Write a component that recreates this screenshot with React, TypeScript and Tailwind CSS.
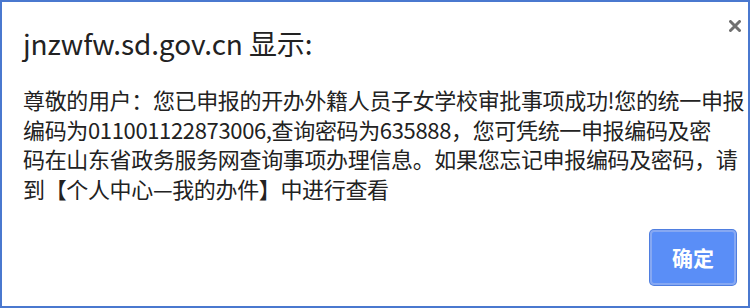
import React from "react";

export default function App() {
  return (
    <div
      className="w-[750px] h-[308px] bg-white border-2 border-[#4a78cf] flex flex-col overflow-hidden"
      style={{ fontFamily: '"Noto Sans CJK SC", "Noto Sans", sans-serif' }}
    >
      <div className="flex justify-between items-start pl-[21px] pr-[7px] pt-[25px]">
        <div className="text-[28px] leading-[32px] text-[#222] tracking-[-0.1px]">
          jnzwfw.sd.gov.cn 显示:
        </div>
        <svg
          width="12"
          height="12"
          viewBox="0 0 12 12"
          className="-mt-[7px]"
          aria-label="close"
        >
          <path d="M1.5 1.5 L10.5 10.5 M10.5 1.5 L1.5 10.5" stroke="#707070" strokeWidth="3" strokeLinecap="round" />
        </svg>
      </div>
      <div className="pl-[21px] pr-[4px] mt-[26px] text-[22px] leading-[29.6px] text-[#222] whitespace-nowrap tracking-[-0.35px]">
        <div>尊敬的用户：您已申报的开办外籍人员子女学校审批事项成功!您的统一申报</div>
        <div>编码为011001122873006,查询密码为635888，您可凭统一申报编码及密</div>
        <div>码在山东省政务服务网查询事项办理信息。如果您忘记申报编码及密码，请</div>
        <div>到【个人中心—我的办件】中进行查看</div>
      </div>
      <div className="flex justify-end pr-[12px] mt-[27px]">
        <button className="w-[86px] h-[55px] rounded-[4px] bg-[#5a8ef7] border-2 border-[#86a8f2] shadow-[0_0_0_1px_#4f7ee0] text-white text-[21px] font-bold">
          确定
        </button>
      </div>
    </div>
  );
}
